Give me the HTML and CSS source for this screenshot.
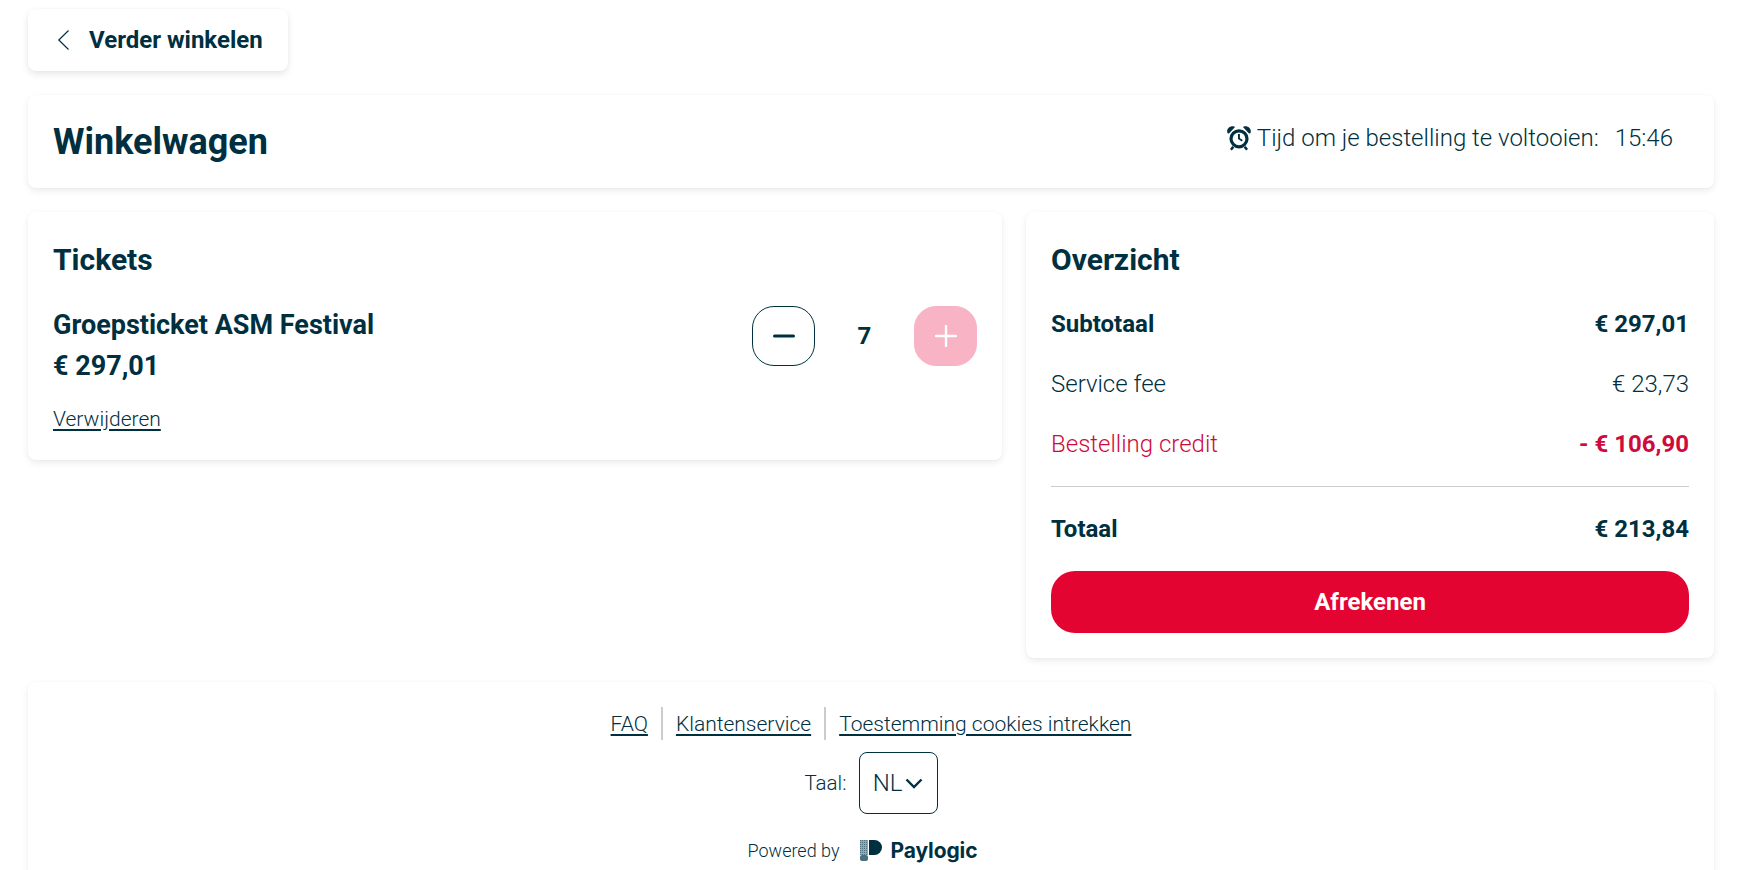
FILE: index.html
```html
<!DOCTYPE html>
<html lang="nl">
<head>
  <meta charset="UTF-8">
  <meta name="viewport" content="width=device-width, initial-scale=1.0">
  <title>Winkelwagen</title>
  <link rel="stylesheet" href="styles.css">
</head>
<body>
  <div class="container">
    <a class="back-btn" href="#">
      <svg class="back-icon" width="14" height="20" viewBox="0 0 14 20"><path d="M12.5 0.5 L2.8 10 L12.5 19.5" fill="none" stroke="#003040" stroke-width="1.2"/></svg>
      <span>Verder winkelen</span>
    </a>

    <div class="card header-card">
      <h1>Winkelwagen</h1>
      <div class="timer">
        <svg width="24" height="26" viewBox="0 0 24 26" fill="#003040">
          <path fill-rule="evenodd" d="M12 4.2a9.6 9.6 0 1 0 0 19.2 9.6 9.6 0 0 0 0-19.2zm0 3.2a6.4 6.4 0 1 1 0 12.8 6.4 6.4 0 0 1 0-12.8z"/>
          <path d="M11 9h1.9v4.2l2.9 1.8-1 1.5-3.8-2.4z"/>
          <path d="M.5 8C-1 3.8 3 .2 7.2 1.4c.6.2.8.8.4 1.2L2.2 8.2c-.5.4-1.4.3-1.7-.2z"/>
          <path d="M23.5 8c1.5-4.2-2.5-7.8-6.7-6.6-.6.2-.8.8-.4 1.2l5.4 5.6c.5.4 1.4.3 1.7-.2z"/>
          <path d="M5.2 21l-2.2 3 1.8 1.6 2.6-3zM18.8 21l2.2 3-1.8 1.6-2.6-3z"/>
        </svg>
        <span class="timer-label">Tijd om je bestelling te voltooien:</span>
        <span class="timer-value">15:46</span>
      </div>
    </div>

    <div class="columns">
      <div class="card tickets">
        <h2>Tickets</h2>
        <div class="ticket-row">
          <div class="ticket-info">
            <div class="ticket-name">Groepsticket ASM Festival</div>
            <div class="ticket-price">€ 297,01</div>
            <a class="link remove-link" href="#">Verwijderen</a>
          </div>
          <div class="qty">
            <button class="qty-btn minus"><svg width="22" height="22" viewBox="0 0 22 22"><path d="M1.5 11h19" stroke="#003040" stroke-width="3" stroke-linecap="round"/></svg></button>
            <span class="qty-value">7</span>
            <button class="qty-btn plus"><svg width="22" height="22" viewBox="0 0 22 22"><path d="M1 11h20M11 1v20" stroke="#fff" stroke-width="2.4" stroke-linecap="round"/></svg></button>
          </div>
        </div>
      </div>

      <div class="card summary">
        <h2>Overzicht</h2>
        <div class="line bold"><span>Subtotaal</span><span>€ 297,01</span></div>
        <div class="line"><span>Service fee</span><span>€ 23,73</span></div>
        <div class="line credit"><span>Bestelling credit</span><span class="credit-amount">- € 106,90</span></div>
        <div class="line bold total"><span>Totaal</span><span>€ 213,84</span></div>
        <button class="checkout">Afrekenen</button>
      </div>
    </div>

    <div class="card footer">
      <div class="footer-links">
        <a class="link" href="#">FAQ</a>
        <a class="link" href="#">Klantenservice</a>
        <a class="link" href="#">Toestemming cookies intrekken</a>
      </div>
      <div class="lang">
        <span>Taal:</span>
        <div class="lang-select">
          <span>NL</span>
          <svg width="18" height="11" viewBox="0 0 18 11"><path d="M1.5 1.5L9 9l7.5-7.5" fill="none" stroke="#003040" stroke-width="2.4"/></svg>
        </div>
      </div>
      <div class="powered">
        <span>Powered by</span>
        <div class="logo">
          <svg width="22" height="21" viewBox="0 0 22 21">
            <defs>
              <pattern id="dots" width="2" height="2" patternUnits="userSpaceOnUse">
                <rect width="2" height="2" fill="#8fa9b3"/>
                <rect width="1" height="1" fill="#527583"/>
              </pattern>
            </defs>
            <rect x="0" y="0" width="8" height="15" fill="url(#dots)"/>
            <rect x="0" y="15" width="8" height="6" rx="2" fill="#4a7080"/>
            <path d="M9 0h5.5a7.5 7.5 0 0 1 0 15H9z" fill="#003040"/>
          </svg>
          <span class="logo-text">Paylogic</span>
        </div>
      </div>
    </div>
  </div>
</body>
</html>
```

FILE: styles.css
```css
* {
  margin: 0;
  padding: 0;
  box-sizing: border-box;
  font-family: Roboto, Arial, sans-serif;
}

html, body {
  height: 870px;
  overflow: hidden;
}

body {
  background-color: #fff;
  color: #003040;
}

.container {
  padding: 9px 28px 0;
}

.card {
  background-color: #fff;
  border-radius: 8px;
  box-shadow: 0 3px 7px rgba(0, 0, 0, 0.08), 0 0 2px rgba(0, 0, 0, 0.03);
}

.back-btn {
  display: inline-flex;
  align-items: center;
  width: 260px;
  height: 62px;
  padding-left: 28px;
  gap: 19px;
  font-size: 24px;
  font-weight: 700;
  color: #003040;
  text-decoration: none;
  background-color: #fff;
  border-radius: 8px;
  box-shadow: 0 3px 7px rgba(0, 0, 0, 0.1), 0 0 2px rgba(0, 0, 0, 0.03);
}

.header-card {
  display: flex;
  align-items: center;
  justify-content: space-between;
  height: 93px;
  margin-top: 24px;
  padding: 0 41px 0 25px;
}

h1 {
  font-size: 36px;
  font-weight: 700;
}

.timer {
  display: flex;
  align-items: center;
  margin-top: -7px;
  font-size: 24px;
  font-weight: 300;
}

.timer-label {
  margin-left: 6px;
}

.timer-value {
  margin-left: 16px;
}

.columns {
  display: flex;
  align-items: flex-start;
  gap: 24px;
  margin-top: 24px;
}

h2 {
  font-size: 30px;
  font-weight: 700;
}

.tickets {
  width: 974px;
  height: 248px;
  padding: 30px 25px;
}

.ticket-row {
  display: flex;
  justify-content: space-between;
  margin-top: 32px;
}

.ticket-name {
  font-size: 27px;
  font-weight: 700;
}

.ticket-price {
  margin-top: 9px;
  font-size: 27px;
  font-weight: 700;
}

.link {
  color: #003040;
  font-weight: 300;
  text-decoration: underline;
  text-underline-offset: 3px;
}

.remove-link {
  display: inline-block;
  margin-top: 25px;
  font-size: 21px;
}

.qty {
  display: flex;
  align-items: center;
  height: 62px;
  margin-top: -4px;
}

.qty-btn {
  display: flex;
  align-items: center;
  justify-content: center;
  width: 63px;
  height: 60px;
  border-radius: 22px;
  border: 1px solid #003040;
  background-color: #fff;
}

.qty-btn.plus {
  background-color: #f8b3c4;
  border-color: #f8b3c4;
}

.qty-value {
  width: 99px;
  text-align: center;
  font-size: 24px;
  font-weight: 700;
}

.summary {
  width: 688px;
  height: 446px;
  padding: 30px 25px;
}

.summary h2 {
  margin-bottom: 29px;
}

.line {
  display: flex;
  justify-content: space-between;
  margin-bottom: 24px;
  height: 36px;
  line-height: 36px;
  font-size: 24px;
  font-weight: 300;
}

.line.bold {
  font-weight: 700;
}

.line.credit {
  color: #cf0a3c;
}

.credit-amount {
  font-weight: 700;
}

.line.total {
  margin-bottom: 0;
  height: 85px;
  line-height: 85px;
  border-top: 1px solid #ccc;
}

.checkout {
  display: block;
  width: 100%;
  height: 62px;
  border: none;
  border-radius: 24px;
  background-color: #e40432;
  color: #fff;
  font-size: 24px;
  font-weight: 700;
}

.footer {
  height: 230px;
  margin-top: 24px;
  padding-top: 25px;
}

.footer-links {
  display: flex;
  justify-content: center;
  font-size: 21px;
}

.footer-links .link {
  height: 33px;
  line-height: 35px;
  padding: 0 13px;
  border-left: 2px solid #ccc;
}

.footer-links .link:first-child {
  border-left: none;
}

.lang {
  display: flex;
  align-items: center;
  justify-content: center;
  gap: 12px;
  margin-top: 12px;
  font-size: 20.5px;
  font-weight: 300;
}

.lang-select {
  display: flex;
  align-items: center;
  justify-content: center;
  gap: 3px;
  width: 79px;
  height: 62px;
  border: 1px solid #003040;
  border-radius: 8px;
  font-size: 24px;
}

.powered {
  display: flex;
  align-items: center;
  justify-content: center;
  gap: 20px;
  margin-top: 24px;
  font-size: 18px;
  font-weight: 300;
}

.logo {
  display: flex;
  align-items: center;
  gap: 9px;
  margin-right: 17px;
}

.logo-text {
  font-family: Inter, sans-serif;
  font-size: 21px;
  font-weight: 700;
  letter-spacing: -0.1px;
}
```
